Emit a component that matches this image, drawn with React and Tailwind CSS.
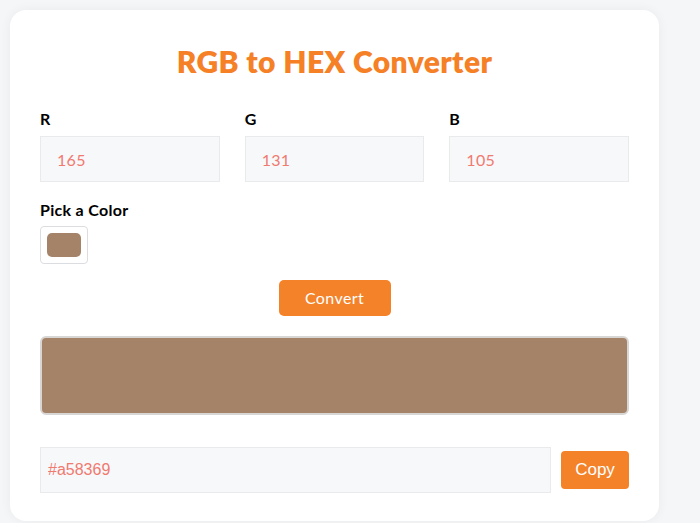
import { useState } from "react";

const poppins = { fontFamily: "Lato, 'Open Sans', sans-serif" };

function NumberField({ label, value, onChange }) {
  return (
    <div className="flex flex-col">
      <label className="mb-[7px] text-[16px] font-bold leading-[20px] tracking-[0.3px] text-black">{label}</label>
      <input
        type="text"
        value={value}
        onChange={(e) => onChange(e.target.value)}
        className="h-[46px] w-full border border-[#e9eaec] bg-[#f7f8fa] px-4 text-[16px] tracking-[0.3px] text-[#f07a70] outline-none"
      />
    </div>
  );
}

export default function App() {
  const [r, setR] = useState("165");
  const [g, setG] = useState("131");
  const [b, setB] = useState("105");
  const hex = "#a58369";

  return (
    <div className="min-h-[523px] bg-[#f5f6f8] pl-[10px] pt-[10px] pr-[41px]" style={poppins}>
      <div className="h-[511px] rounded-[16px] bg-white px-[30px] pt-[32px] shadow-[0_0_12px_rgba(0,0,0,0.05)]">
        <h1 className="text-center text-[30px] font-extrabold leading-[38px] tracking-[0.4px] text-[#f58026]">
          RGB to HEX Converter
        </h1>

        {/* inputs */}
        <div className="mt-[29px] grid grid-cols-3 gap-[25px]">
          <NumberField label="R" value={r} onChange={setR} />
          <NumberField label="G" value={g} onChange={setG} />
          <NumberField label="B" value={b} onChange={setB} />
        </div>

        <div className="mt-[18px]">
          <div className="text-[16px] font-bold leading-[20px] tracking-[0.3px] text-black">Pick a Color</div>
          <div className="mt-[6px] flex h-[38px] w-[48px] items-center justify-center rounded-[4px] border border-[#dcdde0] bg-white">
            <div className="h-[24px] w-[34px] rounded-[5px] bg-[#a58369]" />
          </div>
        </div>

        <div className="mt-[16px] flex justify-center">
          <button className="h-[36px] w-[112px] rounded-[5px] bg-[#f48228] text-[16px] tracking-[0.4px] text-white">
            Convert
          </button>
        </div>

        <div className="mt-[20px] h-[79px] rounded-[6px] border-2 border-[#d8d6d4] bg-[#a58369]" />

        <div className="mt-[32px] flex items-center gap-[10px]">
          <input
            type="text"
            readOnly
            value={hex}
            className="h-[46px] flex-1 border border-[#e9eaec] bg-[#f7f8fa] px-[7px] text-[16px] text-[#f07a70] outline-none"
            style={{ fontFamily: "'Liberation Sans', Arial, sans-serif" }}
          />
          <button
            className="h-[38px] w-[68px] rounded-[4px] bg-[#f48228] text-[17px] text-white"
            style={{ fontFamily: "'Liberation Sans', Arial, sans-serif" }}
          >
            Copy
          </button>
        </div>
      </div>
    </div>
  );
}
